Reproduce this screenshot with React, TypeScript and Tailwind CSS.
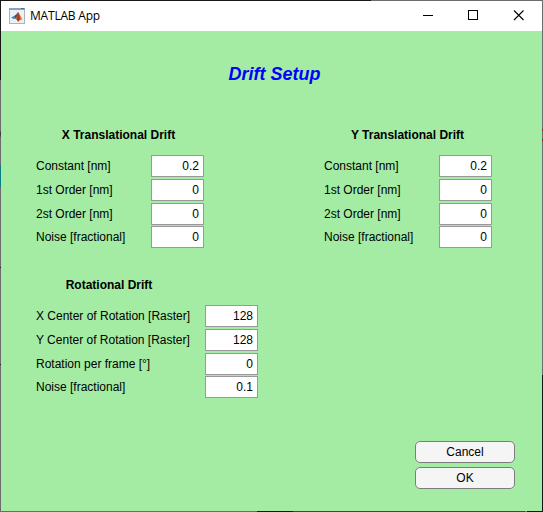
import React from "react";

type Field = { label: string; value: string };

const translational: Field[] = [
  { label: "Constant [nm]", value: "0.2" },
  { label: "1st Order [nm]", value: "0" },
  { label: "2st Order [nm]", value: "0" },
  { label: "Noise [fractional]", value: "0" },
];

const rotational: Field[] = [
  { label: "X Center of Rotation [Raster]", value: "128" },
  { label: "Y Center of Rotation [Raster]", value: "128" },
  { label: "Rotation per frame [°]", value: "0" },
  { label: "Noise [fractional]", value: "0.1" },
];

function Group({ title, fields, width, titleWidth }: { title: string; fields: Field[]; width: string; titleWidth: string }) {
  return (
    <section className={width}>
      <h2 className={`${titleWidth} mb-[11px] h-[18px] text-center text-[12px] leading-[18px] font-bold whitespace-nowrap`}>{title}</h2>
      <div className="flex flex-col gap-0.5">
        {fields.map((f) => (
          <label key={f.label} className="flex h-[22px] items-center justify-between last:-mt-px">
            <span className="whitespace-nowrap">{f.label}</span>
            <input
              defaultValue={f.value}
              className="h-[22px] w-[53px] border border-[#999] bg-white pr-1 text-right outline-none"
            />
          </label>
        ))}
      </div>
    </section>
  );
}

function MatlabIcon() {
  return (
    <svg width="16" height="16" viewBox="0 0 16 16">
      <rect x=".5" y=".5" width="15" height="15" fill="#eef1f4" stroke="#a9b4c0" />
      <rect x="0" y="0" width="16" height="2" fill="#86a3bf" />
      <rect x="12" y="0" width="3" height="1" fill="#4f7396" />
      <path d="M2 9.500 5.500 7.800 7.200 9.500 5 11.300z" fill="#3f86c6" />
      <path d="M5.500 7.800C7 7 7.800 5.200 9 4.200L8.200 9 6.500 11z" fill="#27567f" />
      <path d="M9 4C10.500 5 11.500 9 13.800 11.800c-1.800-.6-2.800 0-4.600 1.900C8.500 12.300 7.800 11.500 6.400 11 8 9.500 8 6 9 4z" fill="#e2661f" />
      <path d="M9 4c1 2.500 1.800 5 1.600 8l-1.400 1.700c-.5-1-.9-1.600-1.500-2C8.600 9.500 8.300 6.500 9 4z" fill="#a8351c" />
    </svg>
  );
}

export default function App() {
  return (
    <div className="flex h-[512px] w-[543px] flex-col bg-[#a4eca4] font-['Liberation_Sans',Arial,sans-serif] text-[12px] text-black">
      <div className="h-px shrink-0 bg-[linear-gradient(to_right,#1b1718_371px,#6c6c6c_371px)]" />
      <div className="flex flex-1">
        <div className="w-px shrink-0 bg-[linear-gradient(to_bottom,#1b1718_79px,#6c6c6c_79px,#6c6c6c_129px,#303030_133px,#6c6c6c_137px,#6c6c6c_164px,#0c7c84_164px,#0c7c84_186px,#6c6c6c_186px,#6c6c6c_266px,#1b1718_266px,#1b1718_267px,#6c6c6c_267px,#6c6c6c_363px,#1b1718_363px,#1b1718_364px,#6c6c6c_364px)]" />
        <div className="flex flex-1 flex-col">
          <header className="flex h-[30px] shrink-0 items-center bg-white pl-2">
            <MatlabIcon />
            <span className="ml-[5px] flex-1 font-['Open_Sans','Noto_Sans',sans-serif] text-[12px] tracking-[-0.2px]">MATLAB App</span>
            <svg width="130" height="30" viewBox="0 0 130 30" fill="none" stroke="#000">
              <path d="M11 14.500h10" shapeRendering="crispEdges" />
              <rect x="56.500" y="9.500" width="9" height="9" shapeRendering="crispEdges" />
              <path d="m102 9.500 9.500 9.500m0-9.500-9.500 9.500" strokeWidth="1.100" />
            </svg>
          </header>
          <main className="flex flex-1 flex-col">
            <h1 className="mt-[32px] h-[22px] pl-[6px] text-center text-[18px] leading-[22px] font-bold text-[#0000ff] italic">Drift Setup</h1>
            <div className="mt-[41px] flex justify-between pr-[50px] pl-[35px]">
              <Group title="X Translational Drift" fields={translational} width="w-[168px]" titleWidth="w-[165px]" />
              <Group title="Y Translational Drift" fields={translational} width="w-[168px]" titleWidth="w-[167px]" />
            </div>
            <div className="mt-7 pl-[35px]">
              <Group title="Rotational Drift" fields={rotational} width="w-[222px]" titleWidth="w-[146px]" />
            </div>
            <div className="mt-[43px] mr-[27px] flex flex-col gap-1 self-end">
              <button className="h-[22px] w-[100px] rounded-[5px] border border-[#7d7d7d] bg-[#f5f5f5] leading-5">Cancel</button>
              <button className="h-[22px] w-[100px] rounded-[5px] border border-[#7d7d7d] bg-[#f5f5f5] leading-5">OK</button>
            </div>
          </main>
        </div>
        <div className="w-px shrink-0 bg-[linear-gradient(to_bottom,#6c6c6c_128px,#a01824_128px,#a01824_130px,#6c6c6c_130px,#6c6c6c_138px,#a01824_138px,#a01824_140px,#6c6c6c_140px,#6c6c6c_374px,#1b1718_374px)]" />
      </div>
      <div className="h-px shrink-0 bg-[linear-gradient(to_right,#6c6c6c_257px,#1b1718_257px,#1b1718_293px,#444_293px,#444_525px,#777_525px,#777_527px,#1b1718_527px)]" />
    </div>
  );
}
